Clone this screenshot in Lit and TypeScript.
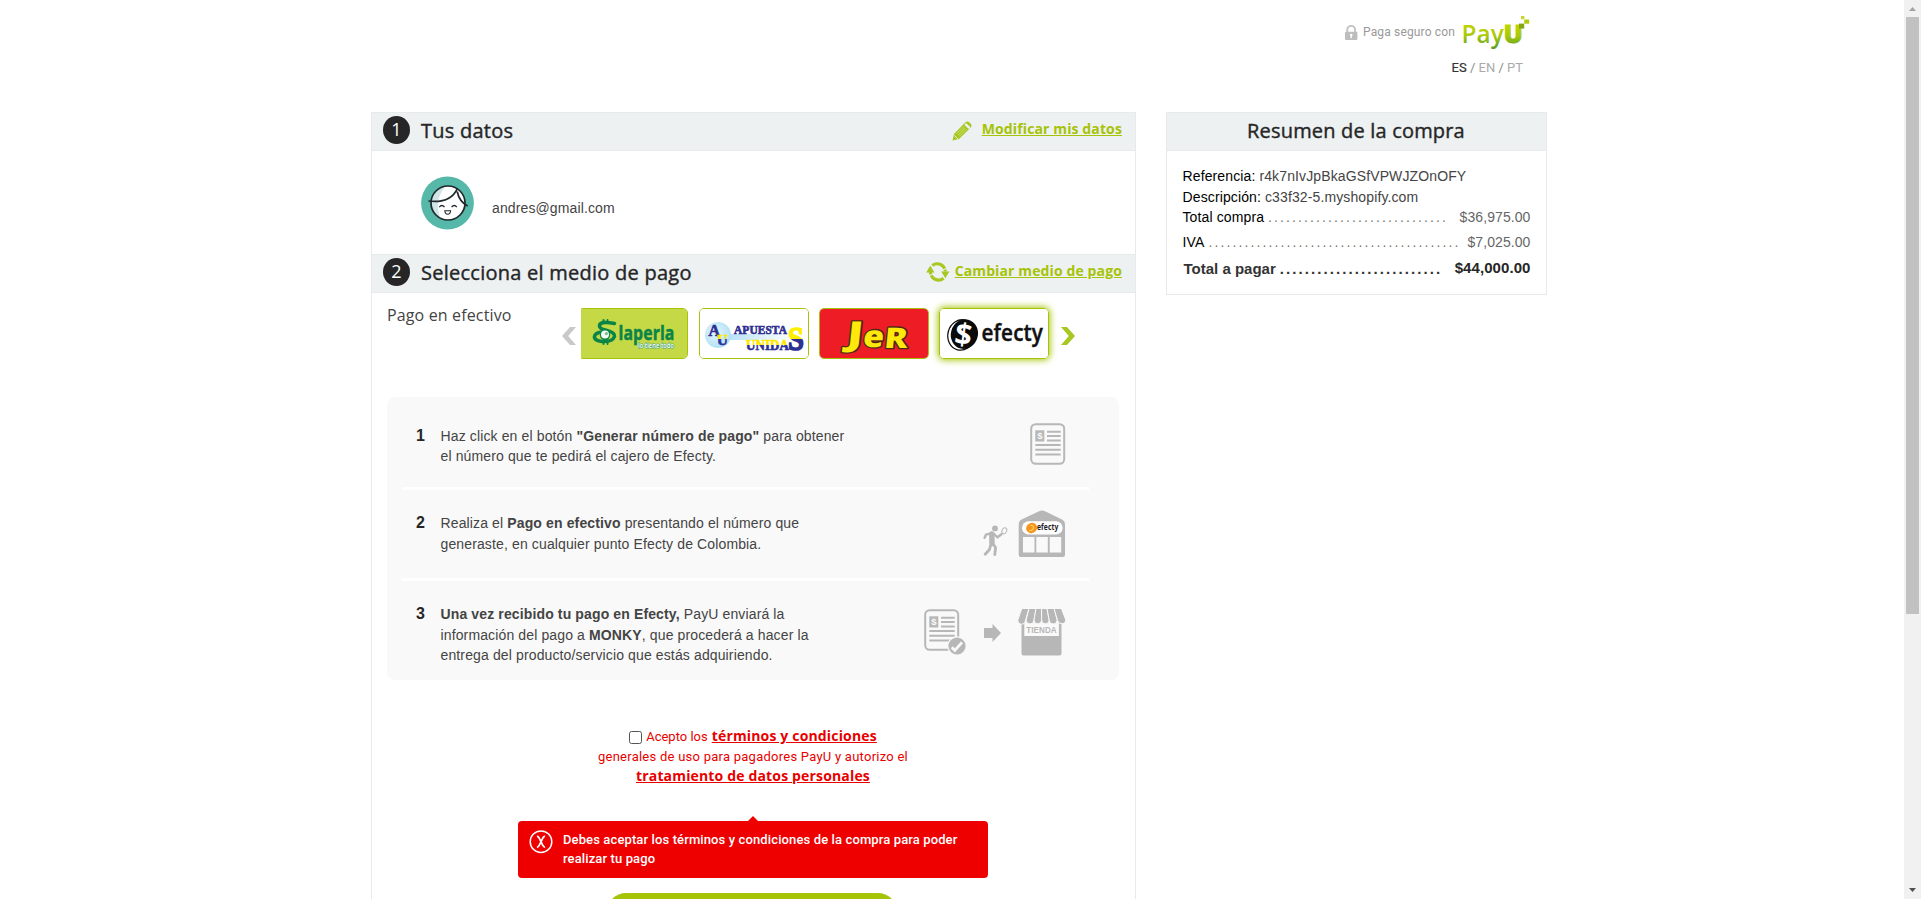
import { LitElement, html, css, svg } from 'lit';
import { customElement } from 'lit/decorators.js';

const G = '#b7b7b7';

const lockIcon = html`<svg class="lock" width="14" height="16" viewBox="0 0 14 16">
  <path d="M3.3 7V4.8a3.9 3.9 0 0 1 7.8 0V7" fill="none" stroke="#c2c2c2" stroke-width="1.9"/>
  <rect x="1" y="6.8" width="12.4" height="8.2" rx="1" fill="#bdbdbd"/>
  <circle cx="7.2" cy="10" r="1.3" fill="#fff"/><rect x="6.6" y="10" width="1.3" height="3.2" fill="#fff"/>
</svg>`;

const payuLogo = html`<svg width="68" height="36" viewBox="0 0 68 36">
  <defs><linearGradient id="pg" gradientUnits="userSpaceOnUse" x1="0" y1="9" x2="0" y2="35">
    <stop offset="0" stop-color="#c3d500"/><stop offset=".45" stop-color="#a9c80c"/><stop offset="1" stop-color="#4f9a2c"/>
  </linearGradient></defs>
  <text x="-.5" y="28" font-family="Open Sans" font-weight="600" font-size="25" textLength="42.500" lengthAdjust="spacingAndGlyphs" fill="url(#pg)">Pay</text>
  <text x="41.500" y="28.300" font-family="Open Sans" font-weight="800" font-size="25.500" textLength="19.500" lengthAdjust="spacingAndGlyphs" fill="url(#pg)" stroke="url(#pg)" stroke-width=".8">U</text>
  <rect x="57" y="8.600" width="5.200" height="5" fill="#86a512"/>
  <rect x="62.200" y="4.500" width="5" height="4.200" fill="#b3cb0f"/>
  <rect x="59" y="1" width="3.400" height="3.200" fill="#c6d62a"/>
</svg>`;

const pencilIcon = html`<svg class="pencil" width="20" height="20" viewBox="0 0 20 20">
  <path d="M.5 19.6 2 13 13.2 1.6a3 3 0 0 1 4.2-.1l1.1 1.1a3 3 0 0 1 0 4.2L7 18.1z" fill="#a6c821"/>
  <path d="M14 3.600l3 3" stroke="#edf1f2" stroke-width="2.600" stroke-linecap="round"/>
  <path d="M4.7 12.7l7-7M7.4 15.2l7-7M6 14l7-7" stroke="#d3e28e" stroke-width=".8"/>
  <path d="M2.4 14.4l3.500 3.400" stroke="#edf1f2" stroke-width=".9"/>
</svg>`;

const cycleIcon = html`<svg class="cycle" width="24" height="20" viewBox="0 0 24 20">
  <path d="M6.3 3.6A8 8 0 0 1 19.3 9.5M17.6 16.2A8 8 0 0 1 4.5 10" fill="none" stroke="#a6c821" stroke-width="3.2" stroke-dasharray="14.5 1 12"/>
  <path d="M15.2 9.6h8.2l-4 6.6zM.2 10.4h8.2L4.3 3.6z" fill="#a6c821"/>
</svg>`;

const avatar = html`<svg class="avatar" width="54" height="54" viewBox="0 0 54 54">
  <circle cx="26.5" cy="27" r="26.4" fill="#56b8a8"/>
  <circle cx="27" cy="27" r="17" fill="#fff"/>
  <path d="M20 11.6A17 17 0 0 0 20 42.6Q12 27 24 10.6z" fill="#cfe5e6"/>
  <circle cx="27" cy="27" r="17" fill="none" stroke="#20282b" stroke-width="1.7"/>
  <path d="M7.4 25q22 2.6 28.8-12.2M36.2 15.5q2 10 10.5 14.6" fill="none" stroke="#20282b" stroke-width="1.7"/>
  <path d="M18.3 31.2q2.6-3.4 5.2 0M30.6 31.2q2.6-3.4 5.2 0" fill="none" stroke="#20282b" stroke-width="1.3"/>
  <path d="M23.8 34.8h5.8q-.3 3.4-2.9 3.4t-2.9-3.4z" fill="#fff" stroke="#20282b" stroke-width="1.1"/>
</svg>`;

const laperla = html`<svg width="110" height="51" viewBox="0 0 110 51">
  <rect width="110" height="51" fill="#c5d946"/>
  <g fill="none" stroke="#0b8447" stroke-linecap="round">
    <path d="M36.500 15.500q-15-3-15 2.500q0 3 7.500 4.500 8 2 7.500 6-2 5.500-12.500 5-8-1-7.500-5 .6-3.500 7-4.500" stroke-width="3.600"/>
    <path d="M25.500 12v3M29.500 12v3M25.500 34v2M29.500 34v2" stroke-width="2"/>
  </g>
  <circle cx="27" cy="27" r="5.200" fill="#0b8447"/><circle cx="27" cy="26.600" r="4" fill="#f4faf0"/><circle cx="28.400" cy="25.600" r="1.700" fill="#7fbf9a"/>
  <text x="40.500" y="31.500" font-family="Open Sans" font-weight="700" font-size="19" textLength="56" lengthAdjust="spacingAndGlyphs" fill="#0b8447" stroke="#0b8447" stroke-width=".5">laperla</text>
  <text x="60" y="39.500" font-family="Open Sans" font-weight="600" font-size="7" textLength="36" lengthAdjust="spacingAndGlyphs" fill="#fff" stroke="#4aa67c" stroke-width="1.200" paint-order="stroke">lo tiene todo</text>
</svg>`;

const apuestas = html`<svg width="110" height="51" viewBox="0 0 110 51">
  <defs>
    <radialGradient id="ab" cx=".4" cy=".4" r=".7"><stop offset="0" stop-color="#e6f6fd"/><stop offset="1" stop-color="#a9dcf5"/></radialGradient>
    <linearGradient id="al"><stop offset="0" stop-color="#b5e1f7"/><stop offset="1" stop-color="#fff"/></linearGradient>
    <linearGradient id="as" gradientUnits="userSpaceOnUse" x1="0" y1="19" x2="0" y2="42"><stop offset=".5" stop-color="#fff000"/><stop offset=".51" stop-color="#2e3192"/></linearGradient>
    <linearGradient id="au" gradientUnits="userSpaceOnUse" x1="0" y1="32" x2="0" y2="42"><stop offset=".45" stop-color="#ffe600"/><stop offset=".5" stop-color="#2e3192"/></linearGradient>
    <linearGradient id="av" gradientUnits="userSpaceOnUse" x1="0" y1="27" x2="0" y2="37"><stop offset=".35" stop-color="#ffe600"/><stop offset=".4" stop-color="#2e3192"/></linearGradient>
  </defs>
  <rect width="110" height="51" fill="#fff"/>
  <rect x="28" y="26" width="66" height="6" fill="url(#al)"/>
  <circle cx="19" cy="27" r="13" fill="url(#ab)"/>
  <g font-family="Liberation Serif" font-weight="bold" fill="#2e3192">
    <text x="9.500" y="28" font-size="16" stroke="#2e3192" stroke-width=".7">A</text>
    <text x="18" y="37" font-size="15" fill="url(#av)" stroke="url(#av)" stroke-width=".6">U</text>
    <text x="35" y="26" font-size="13.500" textLength="53" lengthAdjust="spacingAndGlyphs" stroke="#2e3192" stroke-width=".7">APUESTA</text>
    <text x="47" y="42" font-size="15.500" textLength="43" lengthAdjust="spacingAndGlyphs" fill="url(#au)" stroke="url(#au)" stroke-width=".7">UNIDA</text>
    <text x="89" y="42" font-size="33" textLength="16" lengthAdjust="spacingAndGlyphs" fill="url(#as)" stroke="url(#as)" stroke-width="1.600">S</text>
  </g>
</svg>`;

const jer = html`<svg width="110" height="51" viewBox="0 0 110 51">
  <rect width="110" height="51" fill="#ee1c25"/>
  <g transform="translate(0 40) skewX(-6)" font-family="Open Sans" font-weight="800" fill="#ffe80a" stroke-linejoin="round" stroke="#4d2a16" stroke-width="2.600" paint-order="stroke">
    <text x="27" y="-3" font-size="33" textLength="16" lengthAdjust="spacingAndGlyphs">J</text>
    <text x="43" y="-1.500" font-size="30" textLength="21" lengthAdjust="spacingAndGlyphs">e</text>
    <text x="64.500" y="0" font-size="28.500" textLength="23.500" lengthAdjust="spacingAndGlyphs">R</text>
  </g>
</svg>`;

const efecty = html`<svg width="110" height="51" viewBox="0 0 110 51">
  <rect width="110" height="51" fill="#fff"/>
  <ellipse cx="22.500" cy="27" rx="13.500" ry="15.300" fill="#fff" stroke="#111" stroke-width="1.300" transform="rotate(15 22.500 26.500)"/>
  <ellipse cx="25.500" cy="26" rx="13.500" ry="15" fill="#0a0a0a" transform="rotate(15 25 25.700)"/>
  <text x="16" y="37" font-family="Open Sans" font-weight="700" font-size="30" fill="#fff" transform="rotate(8 25 26)">$</text>
  <text x="42.500" y="33" font-family="Open Sans" font-weight="600" font-size="22.500" textLength="61.500" lengthAdjust="spacingAndGlyphs" fill="#111" stroke="#111" stroke-width=".4">efecty</text>
</svg>`;

const docShapes = svg`
  <rect x="1.200" y="1.200" width="33" height="39.600" rx="4.500" fill="none" stroke=${G} stroke-width="2"/>
  <rect x="5.300" y="7.300" width="9" height="11.200" fill=${G}/>
  <text x="7.200" y="16.200" font-family="Liberation Sans" font-weight="bold" font-size="9.500" fill="#f9f9f9">$</text>
  <path d="M17 8.800h13.700M17 13.100h13.700M17 17.400h13.700M5.300 22h25.400M5.300 26.700h25.400M5.300 31.400h25.400" stroke=${G} stroke-width="2"/>`;

const docIcon = html`<svg width="36" height="42" viewBox="0 0 36 42">${docShapes}</svg>`;

const docCheckIcon = html`<svg width="42" height="47" viewBox="0 0 42 47">${docShapes}
  <circle cx="33" cy="37" r="9.800" fill="#f9f9f9"/><circle cx="33" cy="37" r="8.600" fill=${G}/>
  <path d="M27.800 38.300l3 3.200 7.200-8.200" fill="none" stroke="#f9f9f9" stroke-width="2.800"/>
</svg>`;

const runnerIcon = html`<svg width="25" height="31" viewBox="0 0 25 31">
  <circle cx="12" cy="3.400" r="2.900" fill=${G}/>
  <g fill="none" stroke=${G} stroke-linecap="round" stroke-linejoin="round">
    <path d="M8.800 9 9 18" stroke-width="5.400"/>
    <path d="M7 8.600l-4 1-1.400 3.200M11 9l3.500 3.300 4-3" stroke-width="2.400"/>
    <path d="M9.600 18.500l3 4-.8 7M8 19l-1.500 5.500-4.300 4.800" stroke-width="2.800"/>
    <ellipse cx="21.300" cy="5.800" rx="2.300" ry="3.100" stroke-width="1" transform="rotate(28 21.300 5.800)"/>
  </g>
</svg>`;

const branchIcon = html`<svg width="48" height="48" viewBox="0 0 48 48">
  <path d="M.7 14Q.7 11 3 9.800L21 1.200q3-1.200 6 0l17.500 8.600q2.500 1.200 2.500 4.200v31q0 2-2 2H2.700q-2 0-2-2z" fill=${G}/>
  <rect x="4" y="11.300" width="40.600" height="13.200" rx="6.600" fill="#fff"/>
  <path d="M5 27h11.500v15.500H5zM18.300 27h11.500v15.500H18.300zM31.700 27h11.500v15.500H31.700z" fill="#f9f9f9"/>
  <ellipse cx="13.600" cy="18" rx="5.600" ry="5" fill="#f5951f" transform="rotate(-25 13.600 18)"/>
  <path d="M11 20.500q4 .5 4.500-2.500t-3.200-2.500" fill="none" stroke="#ffcf4d" stroke-width="1.200"/>
  <text x="19" y="20.300" font-family="Open Sans" font-weight="700" font-size="8" textLength="21.500" lengthAdjust="spacingAndGlyphs" fill="#222">efecty</text>
</svg>`;

const arrowIcon = html`<svg width="17" height="18" viewBox="0 0 17 18"><path d="M0 4h8.500V0L17 9l-8.500 9v-4H0z" fill=${G}/></svg>`;

const shopIcon = html`<svg width="49" height="47" viewBox="0 0 49 47">
  <path d="M4.500 13v31.500q0 2 2 2h36q2 0 2-2V13h-2.600v14H7.300V13z" fill=${G}/>
  <g fill=${G} stroke="#f9f9f9" stroke-width="1">
    <path d="M4.800-.5H12L8.400 11.500a3.600 3.600 0 0 1-7.600 0q0-.5.200-1z"/>
    <path d="M12-.5h7.200L17 11a3.700 3.700 0 0 1-7.900 0z"/>
    <path d="M19-.5h5.600V11a3.600 3.600 0 0 1-7.600 0z"/>
    <path d="M24.600-.5h5.400L32.200 11a3.700 3.700 0 0 1-7.600 0z"/>
    <path d="M30-.5h7.200L40.200 11a3.700 3.700 0 0 1-8 0z"/>
    <path d="M37-.5h7.400l4.200 11q.5 4-3.600 4.200-3.500 0-4.400-3.200z"/>
  </g>
  <text x="9.200" y="23.600" font-family="Liberation Sans" font-weight="bold" font-size="8.600" textLength="30.600" lengthAdjust="spacingAndGlyphs" fill=${G}>TIENDA</text>
</svg>`;

const errorIcon = html`<svg class="err-icon" width="24" height="24" viewBox="0 0 24 24">
  <circle cx="12" cy="11.700" r="10.800" fill="none" stroke="#fff" stroke-width="1.500"/>
  <path d="M7.900 6.300q1.500-.1 2.200 1.600l3.800 7.600q.7 1.700 2.200 1.600M16.100 6.300q-1.500-.1-2.200 1.600l-3.800 7.600q-.7 1.700-2.200 1.600" fill="none" stroke="#fff" stroke-width="1.700"/>
</svg>`;

@customElement('app-root')
export class AppRoot extends LitElement {
  static styles = css`
    :host { display: block; background: #fff; }
    * { box-sizing: border-box; }
    svg { display: block; flex: none; }
    .viewport { display: flex; height: 899px; overflow: hidden; font: 14px/16px "Liberation Sans", Arial, sans-serif; letter-spacing: .12px; color: #444; }
    .page { flex: 1; height: 899px; overflow: hidden; padding-left: 371px; }
    .topbar { height: 112px; width: 1159px; padding-top: 15px; }
    .brand { display: flex; justify-content: flex-end; height: 36px; font: 12px/14px Roboto, sans-serif; letter-spacing: .15px; color: #999; }
    .brand-text { margin: 10px 7px 0 5px; }
    .lock { margin-top: 10px; }
    .langs { margin: 9px 7px 0 0; text-align: right; font: 13px/15px Roboto, sans-serif; letter-spacing: 0; color: #aaa; }
    .langs .on { color: #333; -webkit-text-stroke: .2px #333; }
    .langs .sep { color: #888; }
    .columns { display: flex; align-items: flex-start; gap: 30px; }
    .panel { width: 765px; height: 820px; border: solid #e8eaea; border-width: 0 1px; }
    .head { display: flex; align-items: flex-start; height: 39px; background: #edf1f2; border: solid #e7ebec; border-width: 1px 0; padding: 0 13px 0 11px; }
    .badge { width: 27px; height: 28px; margin: 3px 11px 0 0; border-radius: 50%; background: #262626; color: #fff; font: 500 18px/26px "Open Sans", sans-serif; text-align: center; letter-spacing: 0; }
    .title { flex: 1; margin: 4px 0 0; font: 500 20px/27px "Open Sans", sans-serif; letter-spacing: .25px; color: #262626; -webkit-text-stroke: .4px #262626; }
    .link { margin-top: 6px; font: bold 14px/19px "Open Sans", sans-serif; letter-spacing: .12px; color: #a6c307; text-decoration: underline; }
    .pencil { margin: 8px 10px 0 0; }
    .cycle { margin: 7px 5px 0 0; }
    .user { display: flex; height: 103px; padding: 25px 0 0 49px; }
    .email { margin: 24px 0 0 17px; }
    .pay { padding: 11px 15px 0; }
    .method { display: flex; height: 93px; }
    .method-name { width: 175px; font: 16px/22px "Open Sans", sans-serif; letter-spacing: .14px; color: #444; }
    .nav { margin-top: 23px; }
    .cards { display: flex; gap: 10px; width: 468px; height: 51px; margin: 4px 12px 0 5px; justify-content: flex-end; clip-path: inset(-12px -12px -12px 0); }
    .card { flex: none; width: 110px; height: 51px; border-radius: 5px; overflow: hidden; border: 1px solid #a6c307; }
    .card:first-child { margin-right: 1px; }
    .card svg { margin: -1px; }
    .card.on { box-shadow: 0 0 7px 1px #a6c307; }
    .steps { height: 283px; width: 732px; border-radius: 8px; background: #f9f9f9; padding: 0 30px 0 15px; }
    .step { display: flex; height: 90px; padding: 28.500px 23px 0 14px; line-height: 20.500px; }
    .step.two { height: 91px; padding-top: 23px; border-top: 3px solid #fff; }
    .step.three { height: 102px; padding-top: 23px; border-top: 3px solid #fff; }
    .num { width: 24.500px; font-weight: bold; font-size: 16px; color: #262626; }
    .text { flex: 1; letter-spacing: .13px; }
    .art { display: flex; align-items: flex-start; }
    .one .art { margin-top: -2.500px; }
    .two .art { margin-top: -3px; gap: 10px; }
    .two .art svg:first-child { margin-top: 15px; }
    .three .art { margin-top: 5px; gap: 18px; }
    .three .art .a { margin-top: 15px; }
    .shop { margin: 0 0 0 -2px; }
    .terms { margin-top: 46px; margin-left: -1px; font: 13px/20px Roboto, sans-serif; letter-spacing: .25px; color: #e80000; }
    .line { display: flex; justify-content: center; align-items: baseline; height: 20px; }
    .line.lone { letter-spacing: 0; }
    .line.mid { padding-top: 1px; }
    .terms .tlink { font: bold 14px/20px "Open Sans", sans-serif; letter-spacing: .16px; text-decoration: underline; color: #e80000; }
    .check { appearance: none; align-self: flex-start; width: 13px; height: 13px; margin: 5px 4px 0 0; border: 1px solid #555; border-radius: 2.500px; background: #fff; }
    .acc { margin-right: 4px; }
    .error { position: relative; display: flex; width: 470px; height: 57px; margin: 35px auto 0 131px; padding: 9px 0 0 11px; background: #ef0000; border-radius: 4px; color: #fff; font: 500 13px/19px Roboto, sans-serif; letter-spacing: .12px; }
    .error::before { content: ""; position: absolute; left: 230px; top: -5px; border: solid transparent; border-width: 0 5px 5px; border-bottom-color: #ef0000; }
    .err-icon { margin-right: 10px; }
    .go { width: 290px; height: 38px; margin: 15px 0 0 220px; border-radius: 19px; background: #a6c307; }
    .summary { width: 381px; height: 183px; border: solid #e8eaea; border-width: 0 1px 1px; }
    .summary .title { text-align: center; letter-spacing: .18px; padding-left: 1px; }
    .rows { padding: 15px 15.500px 0 15.500px; line-height: 20px; color: #000; }
    .row { display: flex; height: 21px; }
    .row.d { height: 20px; } .row.c { height: 25px; } .row.i { height: 27px; }
    .v { color: #444; white-space: pre; }
    .amt { color: #666; letter-spacing: .09px; margin-left: auto; }
    .dots { flex: none; white-space: nowrap; letter-spacing: 2.110px; margin-left: 4px; color: #777; }
    .tot { font: bold 15px/20px "Liberation Sans", Arial, sans-serif; letter-spacing: 0; color: #333; padding-left: 1px; }
    .tot .amt { color: #262626; letter-spacing: .08px; margin-top: -1px; }
    .tot .dots { color: #333; letter-spacing: 2.080px; }
    .scroll { display: flex; flex-direction: column; justify-content: space-between; width: 17px; height: 899px; background: #f1f1f1; }
    .thumb { width: 13px; height: 597px; margin: 0 2px auto; background: #c1c1c1; }
  `;

  private head(n: string, title: string, icon: unknown, link: string) {
    return html`<header class="head"><span class="badge">${n}</span><h2 class="title">${title}</h2>${icon}<a class="link">${link}</a></header>`;
  }

  render() {
    return html`<div class="viewport">
      <div class="page">
        <div class="topbar">
          <div class="brand">${lockIcon}<span class="brand-text">Paga seguro con</span>${payuLogo}</div>
          <div class="langs"><span class="on">ES</span> <span class="sep">/</span> EN <span class="sep">/</span> PT</div>
        </div>
        <div class="columns">
          <main class="panel">
            ${this.head('1', 'Tus datos', pencilIcon, 'Modificar mis datos')}
            <section class="user">${avatar}<span class="email">andres@gmail.com</span></section>
            ${this.head('2', 'Selecciona el medio de pago', cycleIcon, 'Cambiar medio de pago')}
            <section class="pay">
              <div class="method">
                <div class="method-name">Pago en efectivo</div>
                <svg class="nav" width="14" height="18" viewBox="0 0 14 18"><path d="M8 0h6L6.200 9l7.800 9H8L0 9z" fill="#c9c9c9"/></svg>
                <div class="cards">
                  <div class="card">${laperla}</div>
                  <div class="card">${apuestas}</div>
                  <div class="card">${jer}</div>
                  <div class="card on">${efecty}</div>
                </div>
                <svg class="nav" width="14" height="18" viewBox="0 0 14 18"><path d="M6 0H0l7.800 9L0 18h6l8-9z" fill="#a6c821"/></svg>
              </div>
              <div class="steps">
                <div class="step one"><span class="num">1</span>
                  <div class="text">Haz click en el botón <b>"Generar número de pago"</b> para obtener<br>el número que te pedirá el cajero de Efecty.</div>
                  <div class="art">${docIcon}</div></div>
                <div class="step two"><span class="num">2</span>
                  <div class="text">Realiza el <b>Pago en efectivo</b> presentando el número que<br>generaste, en cualquier punto Efecty de Colombia.</div>
                  <div class="art">${runnerIcon}${branchIcon}</div></div>
                <div class="step three"><span class="num">3</span>
                  <div class="text"><b>Una vez recibido tu pago en Efecty,</b> PayU enviará la<br>información del pago a <b>MONKY</b>, que procederá a hacer la<br>entrega del producto/servicio que estás adquiriendo.</div>
                  <div class="art"><span>${docCheckIcon}</span><span class="a">${arrowIcon}</span><span class="shop">${shopIcon}</span></div></div>
              </div>
              <div class="terms">
                <div class="line lone"><input class="check" type="checkbox"><span class="acc">Acepto los</span><a class="tlink">términos y condiciones</a></div>
                <div class="line mid">generales de uso para pagadores PayU y autorizo el</div>
                <div class="line"><a class="tlink">tratamiento de datos personales</a></div>
              </div>
              <div class="error">${errorIcon}<div>Debes aceptar los términos y condiciones de la compra para poder<br>realizar tu pago</div></div>
              <div class="go"></div>
            </section>
          </main>
          <aside class="summary">
            <header class="head"><h2 class="title">Resumen de la compra</h2></header>
            <div class="rows">
              <div class="row"><span>Referencia:</span><span class="v"> r4k7nIvJpBkaGSfVPWJZOnOFY</span></div>
              <div class="row d"><span>Descripción:</span><span class="v"> c33f32-5.myshopify.com</span></div>
              <div class="row c"><span>Total compra</span><span class="dots">${'.'.repeat(30)}</span><span class="amt">$36,975.00</span></div>
              <div class="row i"><span>IVA</span><span class="dots">${'.'.repeat(42)}</span><span class="amt">$7,025.00</span></div>
              <div class="row tot"><span>Total a pagar</span><span class="dots">${'.'.repeat(26)}</span><span class="amt">$44,000.00</span></div>
            </div>
          </aside>
        </div>
      </div>
      <div class="scroll">
        <svg width="17" height="17" viewBox="0 0 17 17"><path d="M5 11h7L8.500 7z" fill="#a3a3a3"/></svg>
        <div class="thumb"></div>
        <svg width="17" height="17" viewBox="0 0 17 17"><path d="M5 6h7l-3.500 4z" fill="#505050"/></svg>
      </div>
    </div>`;
  }
}
